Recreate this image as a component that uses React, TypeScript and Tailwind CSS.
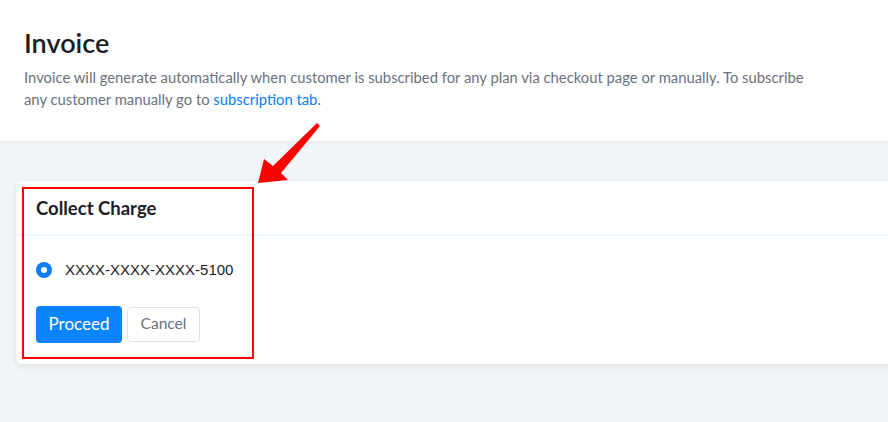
export default function App() {
  return (
    <div className="relative h-[422px] w-[888px] overflow-hidden bg-[#f3f6f9] font-['Lato',sans-serif]">
      <header className="h-[141px] bg-white px-6 pt-[27px] shadow-[0_1px_3px_rgba(0,0,0,0.08)]">
        <h1 className="text-[27px] font-semibold leading-8 text-[#1d1d28]">Invoice</h1>
        <p className="mt-[7px] whitespace-nowrap text-[14.8px] leading-[22px] text-[#6b717c]">
          Invoice will generate automatically when customer is subscribed for any plan via checkout page or manually. To subscribe
          <br />
          any customer manually go to <a className="text-[#0a7cff]">subscription tab</a>.
        </p>
      </header>

      <div className="pl-4 pt-10">
        <div className="w-[900px] rounded-l-md bg-white shadow-[0_2px_6px_rgba(0,0,0,0.1)]">
          <div className="flex h-[55px] items-center border-b-2 border-[#edf5fd] px-5 pt-[2px]">
            <h2 className="text-[18.5px] font-bold text-[#1d1d28]">Collect Charge</h2>
          </div>
          <div className="px-5 pb-[21px] pt-[23px]">
            <label className="flex items-center gap-[13px]">
              <span className="flex h-4 w-4 items-center justify-center rounded-full bg-[#0a7cff]">
                <span className="h-[6px] w-[6px] rounded-full bg-white" />
              </span>
              <span className="font-['Liberation_Sans',sans-serif] text-[15px] text-[#1d1d28]">XXXX-XXXX-XXXX-5100</span>
            </label>
            <div className="mt-[24px] flex items-center gap-[5px]">
              <button className="h-[37px] w-[86px] rounded bg-[#0a84ff] text-[17px] text-white">Proceed</button>
              <button className="h-[35px] w-[73px] rounded border border-[#dee2e6] bg-white text-[15.5px] text-[#6b717c]">Cancel</button>
            </div>
          </div>
        </div>
      </div>

      {/* annotation */}
      <div className="absolute left-[22px] top-[187px] h-[172px] w-[232px] border-2 border-[#ff0000]" />
      <svg className="absolute left-0 top-0" width="888" height="422">
        <polygon points="258,183 264,159 273,166 317,123 320,126 281,173 288,180" fill="#ff0000" />
      </svg>
    </div>
  );
}
